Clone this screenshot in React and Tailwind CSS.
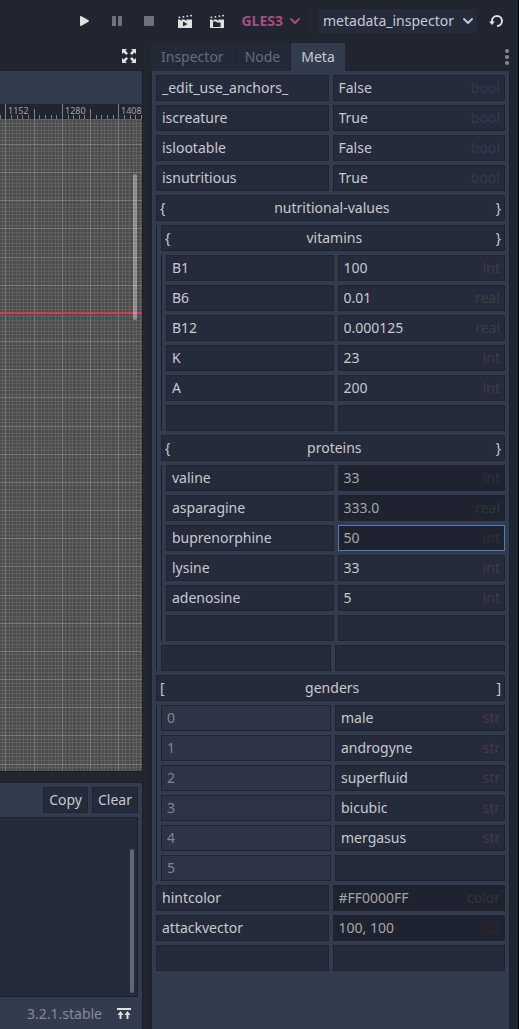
import React from "react";

const ENTRIES = [
  { key: "_edit_use_anchors_", value: "False", type: "bool" },
  { key: "iscreature", value: "True", type: "bool" },
  { key: "islootable", value: "False", type: "bool" },
  { key: "isnutritious", value: "True", type: "bool" },
  {
    key: "nutritional-values",
    open: "{",
    close: "}",
    children: [
      {
        key: "vitamins",
        open: "{",
        close: "}",
        children: [
          { key: "B1", value: "100", type: "int" },
          { key: "B6", value: "0.01", type: "real" },
          { key: "B12", value: "0.000125", type: "real" },
          { key: "K", value: "23", type: "int" },
          { key: "A", value: "200", type: "int" },
          { key: "", value: "" },
        ],
      },
      {
        key: "proteins",
        open: "{",
        close: "}",
        children: [
          { key: "valine", value: "33", type: "int", dim: true },
          { key: "asparagine", value: "333.0", type: "real", dim: true },
          { key: "buprenorphine", value: "50", type: "int", dim: true, active: true },
          { key: "lysine", value: "33", type: "int" },
          { key: "adenosine", value: "5", type: "int" },
          { key: "", value: "" },
        ],
      },
      { key: "", value: "" },
    ],
  },
  {
    key: "genders",
    open: "[",
    close: "]",
    children: [
      { key: "0", value: "male", type: "str", index: true },
      { key: "1", value: "androgyne", type: "str", index: true },
      { key: "2", value: "superfluid", type: "str", index: true },
      { key: "3", value: "bicubic", type: "str", index: true },
      { key: "4", value: "mergasus", type: "str", index: true },
      { key: "5", value: "", index: true },
    ],
  },
  { key: "hintcolor", value: "#FF0000FF", type: "color", dim: true },
  { key: "attackvector", value: "100, 100", type: "v2", dim: true },
  { key: "", value: "" },
];

const TYPE_COLORS = {
  bool: "text-[#2c3c4f]",
  int: "text-[#403a4e]",
  real: "text-[#30443f]",
  str: "text-[#493551]",
  color: "text-[#30353f]",
  v2: "text-[#352430]",
};

const DIM_TYPE_COLORS = {
  ...TYPE_COLORS,
  int: "text-[#322e3c]",
  real: "text-[#293a32]",
};

function EntryRow({ entry }) {
  const { key, value, type, dim, active, index } = entry;
  const keyTone = index ? "bg-[#2d3446] text-[#7f8592]" : "bg-[#262b3b] text-[#c6c9ce]";
  const valueTone = dim ? "bg-[#1f232f] text-[#a3a6ac]" : "bg-[#262b3b] text-[#c6c9ce]";
  const valueBorder = active ? "border-[#507bc0]" : "border-[#1f2430]";
  const typeColor = (dim ? DIM_TYPE_COLORS : TYPE_COLORS)[type];
  return (
    <div className="grid grid-cols-2 gap-1">
      <input
        aria-label={key ? `Key ${key}` : "New key"}
        defaultValue={key}
        readOnly={index}
        className={`h-[26px] w-full min-w-0 border border-[#1f2430] px-[5px] pb-[2px] outline-none ${keyTone}`}
      />
      <label className={`flex h-[26px] min-w-0 items-center border pl-[5px] pr-1 ${valueTone} ${valueBorder}`}>
        <input
          aria-label={key ? `Value of ${key}` : "New value"}
          defaultValue={value}
          className="h-full w-0 min-w-0 flex-1 bg-transparent pb-[2px] outline-none"
        />
        {type && <span className={typeColor}>{type}</span>}
      </label>
    </div>
  );
}

function EntryGroup({ entry }) {
  return (
    <section className="flex flex-col gap-1">
      <button className="flex h-[26px] w-full items-center border border-[#1f2430] bg-[#262b3b] px-[3px] text-[#c6c9ce]">
        <span className="w-2 text-left">{entry.open}</span>
        <span className="flex-1 text-center">{entry.key}</span>
        <span>{entry.close}</span>
      </button>
      <div className="border-l border-[#18202e] pl-1">
        <EntryList entries={entry.children} />
      </div>
    </section>
  );
}

function EntryList({ entries }) {
  return (
    <div className="flex flex-col gap-1">
      {entries.map((entry, i) =>
        entry.children ? <EntryGroup key={i} entry={entry} /> : <EntryRow key={i} entry={entry} />
      )}
    </div>
  );
}

function Clapper({ cutout }) {
  return (
    <svg width="16" height="16" viewBox="0 0 16 16" fill="#e0e0e0" aria-hidden="true">
      <path d="M1.300 3.800l1.700-.3.500 1.500-1.700.3zM5.300 3.200l1.700-.3.500 1.500-1.700.3zM9.300 2.600l1.700-.3.500 1.500-1.700.3zM13 2l1.700-.3.500 1.500-1.700.3z" />
      <path fillRule="evenodd" d={`M1 6.500h2l.8 1h1.400l-.7-1h3l.8 1h1.400l-.7-1h6V15H1z${cutout}`} />
    </svg>
  );
}

function Chevron({ color }) {
  return (
    <svg width="12" height="12" viewBox="0 0 12 12" fill="none" stroke={color} strokeWidth="2" strokeLinecap="round" strokeLinejoin="round" aria-hidden="true">
      <path d="M2 4l4 4 4-4" />
    </svg>
  );
}

function TopBar() {
  return (
    <header className="flex h-[42px] items-center justify-end pr-[14px]">
      <div className="flex items-center gap-4">
        <button aria-label="Play">
          <svg width="16" height="16" viewBox="0 0 16 16" fill="#e0e0e0">
            <path d="M3 4v8a1 1 0 0 0 1.500.8l7-4a1 1 0 0 0 0-1.600l-7-4A1 1 0 0 0 3 4z" />
          </svg>
        </button>
        <button aria-label="Pause">
          <svg width="16" height="16" viewBox="0 0 16 16" fill="#6f727a">
            <rect x="3" y="3" width="4" height="10" rx=".6" />
            <rect x="9" y="3" width="4" height="10" rx=".6" />
          </svg>
        </button>
        <button aria-label="Stop">
          <svg width="16" height="16" viewBox="0 0 16 16" fill="#6f727a">
            <rect x="3" y="3" width="10" height="10" rx="1" />
          </svg>
        </button>
      </div>
      <div className="ml-5 flex items-center gap-4">
        <button aria-label="Play scene">
          <Clapper cutout="M6 8.500v5l4.500-2.500z" />
        </button>
        <button aria-label="Play custom scene">
          <Clapper cutout="M4 8.500V14h7.500V9.500H8l-1-1z" />
        </button>
      </div>
      <button className="ml-4 flex items-center gap-[6px] font-bold text-[#a4507f]">
        GLES3
        <Chevron color="#a4507f" />
      </button>
      <div className="ml-[9px] h-6 w-px bg-[#262c3a]" />
      <div className="ml-[7px] flex h-6 w-[159px] items-center bg-[#262b3b] pl-[5px] pr-[3px] text-[#c6c9ce]">
        <select aria-label="Project" className="min-w-0 flex-1 appearance-none bg-transparent outline-none">
          <option>metadata_inspector</option>
        </select>
        <Chevron color="#c0c3c8" />
      </div>
      <button aria-label="Reload" className="ml-[11px]">
        <svg width="16" height="16" viewBox="0 0 16 16" fill="none" stroke="#e0e0e0" strokeWidth="2">
          <path d="M4 9V8a5 5 0 1 1 5 5" />
          <path d="M1 8.500h6L4 12z" fill="#e0e0e0" stroke="none" />
        </svg>
      </button>
    </header>
  );
}

const GRID_LINES = Array.from({ length: 400 }, (_, i) => i - 1);
const TICKS = Array.from({ length: 300 }, (_, i) => i - 1);

function Ruler() {
  return (
    <svg className="block h-[15px] w-full bg-[#21252f]" aria-hidden="true">
      {TICKS.map((i) => {
        const x = Math.round(5.300 + i * 5.655);
        const top = i % 10 === 0 ? 0 : i % 5 === 0 ? 5 : 11;
        return <rect key={i} x={x} y={top} width="1" height={15 - top} fill="#7d8086" />;
      })}
      {[1152, 1280, 1408].map((n, i) => (
        <text key={n} x={Math.round(8 + i * 56.500)} y="10" fontSize="9" fill="#a0a3a8">
          {n}
        </text>
      ))}
    </svg>
  );
}

function Canvas() {
  return (
    <div className="relative min-h-0 flex-1 overflow-hidden bg-[#4d4d4d]">
      <svg className="absolute inset-0 h-full w-full" aria-hidden="true">
        {GRID_LINES.map((i) => (
          <React.Fragment key={i}>
            <rect x={Math.round(5.300 + i * 3.534)} y="0" width="1" height="100%" fill="#fff" opacity={i % 8 === 0 ? 0.22 : 0.085} />
            <rect x="0" y={Math.round(25 + (i - 7) * 3.520)} width="100%" height="1" fill="#fff" opacity={(i - 7) % 8 === 0 ? 0.22 : 0.085} />
          </React.Fragment>
        ))}
        <rect x="0" y="193" width="100%" height="2" fill="#c93f56" />
      </svg>
      <div className="absolute right-[5px] top-[55px] h-[146px] w-1 rounded-sm bg-white/35" />
    </div>
  );
}

function OutputPanel() {
  return (
    <section className="mt-[10px] border-r border-t border-[#1b202b] bg-[#333b4e] pt-1">
      <div className="flex justify-end gap-1 pr-1 text-[#c6c9ce]">
        <button className="h-[26px] border border-[#1f2430] bg-[#262b3b] px-[5px]">Copy</button>
        <button className="h-[26px] border border-[#1f2430] bg-[#262b3b] px-[5px]">Clear</button>
      </div>
      <div className="mr-1 mt-1 flex h-[180px] justify-end border-b border-r border-t border-[#1b202b] bg-[#262b3b] pb-[3px] pr-[3px] pt-[31px]">
        <div className="w-1 rounded-sm bg-[#636773]" />
      </div>
      <footer className="flex h-8 items-center justify-end gap-[14px] pr-[10px] pt-px">
        <span className="text-[#868b97]">3.2.1.stable</span>
        <button aria-label="Expand bottom panel">
          <svg width="16" height="16" viewBox="0 0 16 16" fill="#e0e0e0">
            <path d="M1 2h14v2H1zM4.500 5l3 4h-2v4h-2V9h-2zM11.500 5l3 4h-2v4h-2V9h-2z" />
          </svg>
        </button>
      </footer>
    </section>
  );
}

function MainColumn() {
  return (
    <main className="flex min-w-0 flex-1 flex-col">
      <div className="flex h-7 items-center justify-end pr-[6px]">
        <button aria-label="Distraction free mode">
          <svg width="16" height="16" viewBox="0 0 16 16" fill="#e0e0e0">
            <path d="M1 1h5L4.400 2.600 7 5.200 5.200 7 2.600 4.400 1 6z" />
            <path d="M15 1h-5l1.600 1.600L9 5.200 10.800 7l2.600-2.600L15 6z" />
            <path d="M1 15h5l-1.600-1.600L7 10.800 5.200 9l-2.600 2.600L1 10z" />
            <path d="M15 15h-5l1.600-1.600L9 10.800 10.800 9l2.600 2.600L15 10z" />
          </svg>
        </button>
      </div>
      <div className="flex min-h-0 flex-1 flex-col border-b border-r border-t border-[#1b202b]">
        <div className="h-[33px] bg-[#333b4e]" />
        <Ruler />
        <Canvas />
      </div>
      <OutputPanel />
    </main>
  );
}

function Dock() {
  return (
    <aside className="flex w-[359px] shrink-0 flex-col">
      <div className="flex h-[29px] items-end justify-between pr-px">
        <div role="tablist" className="flex h-7 gap-px text-[#686c78]">
          <button role="tab" aria-selected="false" className="bg-[#242937] px-[10px]">
            Inspector
          </button>
          <button role="tab" aria-selected="false" className="bg-[#242937] px-[10px]">
            Node
          </button>
          <button role="tab" aria-selected="true" className="bg-[#333b4e] px-[10px] text-[#c6c9ce]">
            Meta
          </button>
        </div>
        <button aria-label="Dock menu" className="self-center">
          <svg width="4" height="16" viewBox="0 0 4 16" fill="#868991">
            <circle cx="2" cy="2" r="2" />
            <circle cx="2" cy="8" r="2" />
            <circle cx="2" cy="14" r="2" />
          </svg>
        </button>
      </div>
      <div className="flex-1 border-x border-[#1b202b] bg-[#333b4e] p-1">
        <EntryList entries={ENTRIES} />
      </div>
    </aside>
  );
}

export default function App() {
  return (
    <div className="flex min-h-screen flex-col border-r border-black bg-[#212530] font-['Noto_Sans',sans-serif] text-sm">
      <TopBar />
      <div className="flex flex-1 gap-2 pr-2">
        <MainColumn />
        <Dock />
      </div>
    </div>
  );
}
